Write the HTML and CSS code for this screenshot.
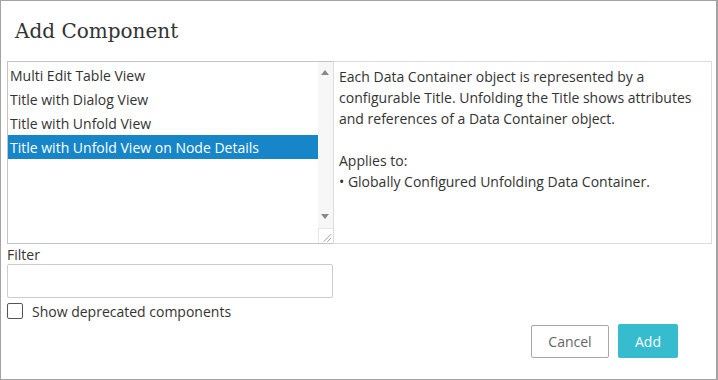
FILE: index.html
```html
<!DOCTYPE html>
<html lang="en">
<head>
  <meta charset="UTF-8">
  <title>Add Component</title>
  <link rel="stylesheet" href="styles.css">
</head>
<body>
  <div class="dialog">
    <h1 class="dialog-title">Add Component</h1>

    <div class="picker">
      <div class="list-box">
        <ul class="list">
          <li class="list-item">Multi Edit Table View</li>
          <li class="list-item">Title with Dialog View</li>
          <li class="list-item">Title with Unfold View</li>
          <li class="list-item selected">Title with Unfold View on Node Details</li>
        </ul>
        <div class="scrollbar">
          <span class="arrow up"></span>
          <span class="arrow down"></span>
          <span class="grip">
            <svg width="15" height="15" viewBox="0 0 15 15">
              <path d="M5 13 L13 5 M9 13 L13 9" stroke="#999" stroke-width="1"/>
            </svg>
          </span>
        </div>
      </div>
      <div class="description">
        <p>Each Data Container object is represented by a configurable Title. Unfolding the Title shows attributes and references of a Data Container object.</p>
        <p class="applies">Applies to:<br>&bull; Globally Configured Unfolding Data Container.</p>
      </div>
    </div>

    <div class="filter">
      <label class="filter-label" for="filter">Filter</label>
      <input class="filter-input" id="filter" type="text">
    </div>

    <label class="check-row">
      <span class="checkbox"></span>
      <span>Show deprecated components</span>
    </label>

    <div class="actions">
      <button class="btn btn-cancel">Cancel</button>
      <button class="btn btn-add">Add</button>
    </div>
  </div>
</body>
</html>
```

FILE: styles.css
```css
* {
  box-sizing: border-box;
  margin: 0;
  padding: 0;
}

body {
  width: 718px;
  height: 380px;
  background: #ffffff;
  color: #333333;
  font-family: 'Open Sans', 'Noto Sans', sans-serif;
  font-size: 14px;
  overflow: hidden;
}

.dialog {
  width: 718px;
  height: 380px;
  border: 1px solid #a3a3a3;
  border-right-width: 2px;
  padding: 0 4px 0 6px;
}

.dialog-title {
  font-family: 'DejaVu Serif', 'Liberation Serif', serif;
  font-size: 20px;
  font-weight: 400;
  color: #333333;
  padding: 18px 0 0 8px;
  height: 60px;
}

.picker {
  display: flex;
  height: 183px;
}

.list-box {
  width: 326px;
  display: flex;
  border: 1px solid #c4c4c4;
  border-right: none;
}

.list {
  list-style: none;
  flex: 1;
  padding-top: 1px;
}

.list-item {
  height: 24px;
  line-height: 26px;
  padding-left: 2px;
  white-space: nowrap;
  overflow: hidden;
}

.list-item.selected {
  background: #1686c9;
  color: #ffffff;
}

.scrollbar {
  width: 15px;
  background: #f7f7f7;
  position: relative;
}

.arrow {
  position: absolute;
  left: 3px;
  width: 0;
  height: 0;
  border-left: 4px solid transparent;
  border-right: 4px solid transparent;
}

.arrow.up {
  top: 8px;
  border-bottom: 5px solid #8a8a8a;
}

.arrow.down {
  bottom: 24px;
  border-top: 5px solid #8a8a8a;
}

.grip {
  position: absolute;
  right: 0;
  bottom: 0;
  width: 15px;
  height: 15px;
  background: #ffffff;
  border-top: 1px solid #e6e6e6;
  border-left: 1px solid #e6e6e6;
  display: flex;
}

.description {
  flex: 1;
  border: 1px solid #dcdcdc;
  padding: 4px 5px;
  line-height: 21px;
}

.applies {
  margin-top: 21px;
}

.filter {
  display: flex;
  flex-direction: column;
  width: 326px;
  margin-top: 2px;
}

.filter-label {
  line-height: 18px;
}

.filter-input {
  height: 34px;
  border: 1px solid #cccccc;
  border-radius: 2px;
  font-family: inherit;
  font-size: 14px;
  padding: 0 6px;
}

.check-row {
  display: flex;
  align-items: center;
  gap: 9px;
  margin-top: 5px;
  height: 16px;
}

.checkbox {
  width: 16px;
  height: 16px;
  border: 1.5px solid #555555;
  border-radius: 2px;
}

.actions {
  display: flex;
  justify-content: flex-end;
  gap: 9px;
  padding-right: 34px;
  margin-top: 5px;
  align-items: center;
}

.btn {
  font-family: inherit;
  font-size: 14px;
  height: 34px;
  border-radius: 2px;
  cursor: pointer;
}

.btn-cancel {
  width: 78px;
  height: 33px;
  background: #ffffff;
  color: #666666;
  border: 1px solid #a8a8a8;
}

.btn-add {
  width: 60px;
  background: #35bccf;
  color: #ffffff;
  border: none;
}
```
